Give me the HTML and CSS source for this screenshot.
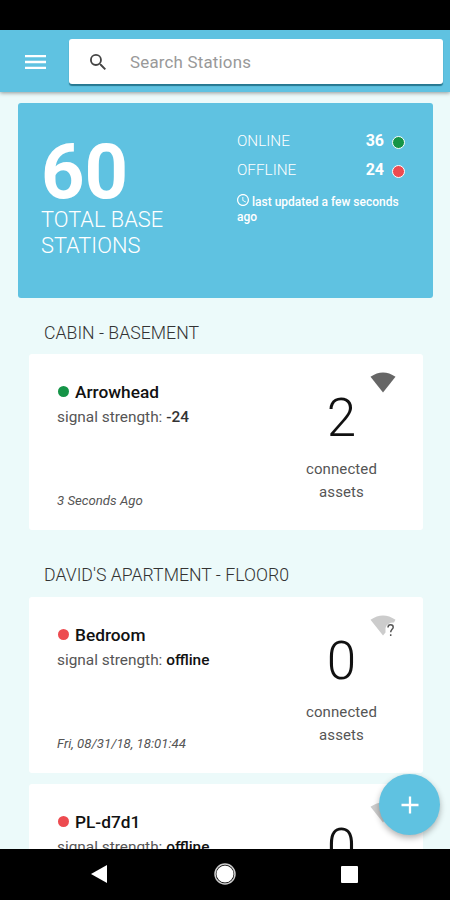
FILE: index.html
```html
<!DOCTYPE html>
<html lang="en">
<head>
<meta charset="utf-8">
<title>Base Stations</title>
<link rel="stylesheet" href="styles.css">
</head>
<body>
<div class="statusbar"></div>
<header class="topbar">
  <svg class="menu" viewBox="0 0 21 14"><path d="M0 1.2h21M0 7h21M0 12.8h21" stroke="#fff" stroke-width="2.3"/></svg>
  <div class="search">
    <svg class="search-icon" viewBox="3 3 17.5 17.5"><path fill="#444" d="M15.5 14h-.79l-.28-.27A6.47 6.47 0 0 0 16 9.5 6.5 6.5 0 1 0 9.5 16c1.61 0 3.09-.59 4.23-1.57l.27.28v.79l5 4.99L20.49 19l-4.99-5zm-6 0a4.5 4.5 0 1 1 0-9 4.5 4.5 0 0 1 0 9z"/></svg>
    <span class="placeholder">Search Stations</span>
  </div>
</header>
<main class="content">
  <section class="summary">
    <div class="total">
      <div class="total-num">60</div>
      <div class="total-label">TOTAL BASE<br>STATIONS</div>
    </div>
    <div class="status">
      <div class="status-row"><span class="status-name">ONLINE</span><b>36</b><i class="ring green"></i></div>
      <div class="status-row"><span class="status-name">OFFLINE</span><b>24</b><i class="ring red"></i></div>
      <div class="updated"><svg class="clock" viewBox="2 2 20 20"><path fill="#fff" d="M11.99 2C6.47 2 2 6.48 2 12s4.47 10 9.99 10C17.52 22 22 17.52 22 12S17.52 2 11.99 2zM12 20a8 8 0 1 1 0-16 8 8 0 0 1 0 16zm.5-13H11v6l5.25 3.15.75-1.23-4.5-2.67z"/></svg> last updated a few seconds<br>ago</div>
    </div>
  </section>

  <h2 class="group">CABIN - BASEMENT</h2>
  <article class="card">
    <div class="info">
      <div class="name"><i class="dot green"></i><span>Arrowhead</span></div>
      <div class="signal">signal strength: <b>-24</b></div>
      <div class="time">3 Seconds Ago</div>
    </div>
    <div class="assets"><div class="count">2</div><div class="label">connected<br>assets</div></div>
    <svg class="wifi" viewBox="0 0 26 22"><path fill="#666" d="M.5 4.8Q13-4 25.5 4.8L13 20.5z"/></svg>
  </article>

  <h2 class="group second">DAVID'S APARTMENT - FLOOR0</h2>
  <article class="card">
    <div class="info">
      <div class="name"><i class="dot red"></i><span>Bedroom</span></div>
      <div class="signal">signal strength: <b class="off">offline</b></div>
      <div class="time">Fri, 08/31/18, 18:01:44</div>
    </div>
    <div class="assets"><div class="count">0</div><div class="label">connected<br>assets</div></div>
    <svg class="wifi" viewBox="0 0 26 22"><path fill="#ccc" d="M.5 4.8Q13-4 25.5 4.8L24 7.5Q17 7.5 15.5 13V17.4L13 20.5z"/><path d="M18 12.4Q18 9.8 20.6 9.8T23.2 12.2C23.2 14.2 20.7 14.5 20.7 17.2M20.7 19.2V21" fill="none" stroke="#555" stroke-width="1.5"/></svg>
  </article>
  <article class="card">
    <div class="info">
      <div class="name"><i class="dot red"></i><span>PL-d7d1</span></div>
      <div class="signal">signal strength: <b class="off">offline</b></div>
    </div>
    <div class="assets"><div class="count">0</div><div class="label">connected<br>assets</div></div>
    <svg class="wifi" viewBox="0 0 26 22"><path fill="#ccc" d="M.5 4.8Q13-4 25.5 4.8L13 20.5z"/></svg>
  </article>
</main>
<nav class="navbar">
  <svg class="back" viewBox="0 0 16 18"><path fill="#fff" d="M16 0v18L0 9z"/></svg>
  <svg class="home" viewBox="0 0 22 22"><circle cx="11" cy="11" r="10" fill="none" stroke="#ccc" stroke-width="1.5"/><circle cx="11" cy="11" r="8.6" fill="#fff"/></svg>
  <span class="recent"></span>
</nav>
<button class="fab" aria-label="Add"><svg viewBox="0 0 18 18"><path d="M9 .5v17M.5 9h17" stroke="#fff" stroke-width="2.3"/></svg></button>
</body>
</html>
```
FILE: styles.css
```css
* { box-sizing: border-box; }
body {
  margin: 0;
  width: 450px;
  height: 900px;
  overflow: hidden;
  display: flex;
  flex-direction: column;
  position: relative;
  background: #ecfafa;
  font-family: Roboto, "Liberation Sans", sans-serif;
  color: #555;
}
svg { display: block; flex: none; }
.statusbar { height: 30px; flex: none; background: #000; }
.topbar {
  height: 62px;
  flex: none;
  display: flex;
  align-items: center;
  padding: 1px 7px 0 25px;
  background: #5fc2e1;
  box-shadow: 0 1px 4px rgba(0, 0, 0, .4);
  z-index: 1;
}
.menu { width: 21px; height: 14px; }
.search {
  flex: 1;
  height: 45px;
  margin-left: 23px;
  display: flex;
  align-items: center;
  padding-left: 21px;
  background: #fff;
  border-radius: 3px;
  box-shadow: 0 2px 1px rgba(0, 70, 90, .6);
}
.search-icon { width: 16px; height: 16px; }
.placeholder { margin-left: 24px; font-size: 16.9px; color: #999; letter-spacing: .2px; }
.content { flex: 1; min-height: 0; overflow: hidden; padding-top: 11px; }
.summary {
  display: flex;
  width: 415px;
  height: 195px;
  margin-left: 18px;
  background: #5fc2e1;
  border-radius: 3px;
  color: #fff;
}
.total { width: 219px; padding: 31px 0 0 23px; }
.total-num { height: 73px; font-size: 76px; line-height: 76px; font-weight: 700; }
.total-label { font-size: 21.8px; line-height: 26px; font-weight: 300; }
.status { flex: 1; padding: 23px 27px 0 0; }
.status-row { display: flex; align-items: center; height: 29px; font-size: 16px; }
.status-name { flex: 1; font-size: 15.3px; font-weight: 300; }
.ring { width: 13px; height: 13px; border: 1.5px solid #fff; border-radius: 50%; margin: 4px 1px 0 8px; }
.green { background: #159447; }
.red { background: #ed4b50; }
.updated { margin-top: 10px; font-size: 12px; line-height: 14.5px; font-weight: 500; white-space: nowrap; }
.clock { display: inline-block; width: 12px; height: 12px; vertical-align: 0; }
.group { margin: 24px 0 10px 44px; height: 22px; line-height: 22px; font-size: 17.7px; font-weight: 300; color: #333; }
.group.second { margin: 34px 0 11px 44px; }
.card {
  position: relative;
  display: flex;
  width: 394px;
  height: 176px;
  margin: 0 0 11px 29px;
  background: #fff;
  border-radius: 3px;
}
.info { width: 231px; padding: 26px 0 20px 28px; display: flex; flex-direction: column; }
.name { display: flex; align-items: center; height: 24px; font-size: 17.3px; font-weight: 500; color: #111; }
.dot { width: 11px; height: 11px; border-radius: 50%; margin: -1px 6px 0 1px; }
.signal { height: 24px; line-height: 26px; font-size: 15.4px; color: #555; }
.signal b { font-weight: 500; color: #333; }
.signal .off { color: #111; }
.time { margin-top: auto; line-height: 18px; font-size: 13.2px; font-style: italic; }
.assets { width: 163px; padding-top: 32px; text-align: center; }
.count { height: 64px; line-height: 64px; font-size: 53px; font-weight: 300; color: #111; }
.label { padding-top: 8px; line-height: 23px; font-size: 15px; letter-spacing: .1px; }
.wifi { position: absolute; left: 341px; top: 18px; width: 26px; height: 22px; }
.navbar { height: 51px; flex: none; display: flex; align-items: center; padding: 0 0 1px 91px; background: #000; }
.back { width: 16px; height: 18px; }
.home { width: 22px; height: 22px; margin-left: 107px; }
.recent { width: 17px; height: 17px; margin-left: 105px; background: #fff; border-radius: 1px; }
.fab {
  position: absolute;
  left: 379px;
  top: 774px;
  width: 61px;
  height: 61px;
  display: flex;
  align-items: center;
  justify-content: center;
  padding: 0;
  border: 0;
  border-radius: 50%;
  background: #5fc2e1;
  box-shadow: 0 3px 6px rgba(0, 0, 0, .3);
}
.fab svg { width: 18px; height: 18px; }
```
